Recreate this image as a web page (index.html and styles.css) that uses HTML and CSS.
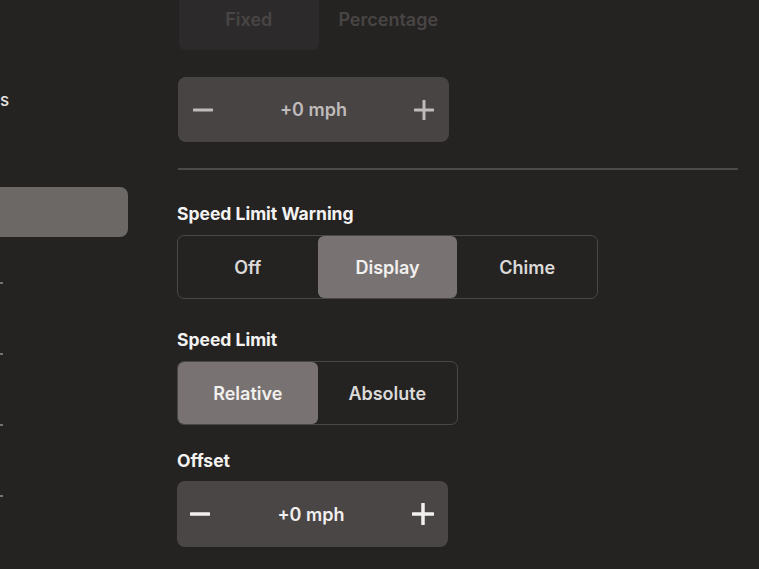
FILE: index.html
```html
<!DOCTYPE html>
<html lang="en">
<head>
    <meta charset="UTF-8">
    <meta name="viewport" content="width=device-width, initial-scale=1.0">
    <title>Speed Assist</title>
    <link rel="stylesheet" href="styles.css">
</head>
<body>
    <div class="screen">
        <aside class="sidebar">
            <div class="nav-item first"><span class="nav-text">s</span></div>
            <div class="nav-item active"></div>
            <div class="nav-item"><span class="nav-mark"></span></div>
            <div class="nav-item"><span class="nav-mark"></span></div>
            <div class="nav-item"><span class="nav-mark"></span></div>
            <div class="nav-item"><span class="nav-mark"></span></div>
        </aside>

        <main class="panel">
            <div class="segmented faded top">
                <button class="segment selected">Fixed</button>
                <button class="segment">Percentage</button>
            </div>

            <div class="stepper dim">
                <button class="step-btn">
                    <svg width="20" height="20" viewBox="0 0 20 20"><path d="M1 10h18" stroke="currentColor" stroke-width="3" stroke-linecap="round"/></svg>
                </button>
                <span class="step-value">+0 mph</span>
                <button class="step-btn">
                    <svg width="20" height="20" viewBox="0 0 20 20"><path d="M1 10h18M10 1v18" stroke="currentColor" stroke-width="3" stroke-linecap="round"/></svg>
                </button>
            </div>

            <hr class="divider">

            <div class="field warning">
                <label>Speed Limit Warning</label>
                <div class="segmented three">
                    <button class="segment">Off</button>
                    <button class="segment selected">Display</button>
                    <button class="segment">Chime</button>
                </div>
            </div>

            <div class="field">
                <label>Speed Limit</label>
                <div class="segmented">
                    <button class="segment selected">Relative</button>
                    <button class="segment">Absolute</button>
                </div>
            </div>

            <div class="field offset">
                <label>Offset</label>
                <div class="stepper">
                    <button class="step-btn">
                        <svg width="20" height="20" viewBox="0 0 20 20"><path d="M1 10h18" stroke="currentColor" stroke-width="3.5" stroke-linecap="round"/></svg>
                    </button>
                    <span class="step-value">+0 mph</span>
                    <button class="step-btn">
                        <svg width="22" height="22" viewBox="0 0 22 22"><path d="M1 11h20M11 1v20" stroke="currentColor" stroke-width="3.5" stroke-linecap="round"/></svg>
                    </button>
                </div>
            </div>
        </main>
    </div>
</body>
</html>
```

FILE: styles.css
```css
body {
    margin: 0;
    background-color: #242322;
    font-family: Inter, "Noto Sans", sans-serif;
    color: #ecebea;
    overflow: hidden;
}
.screen {
    display: flex;
    height: 569px;
}
.sidebar {
    width: 128px;
    flex-shrink: 0;
    display: flex;
    flex-direction: column;
    gap: 21px;
}
.nav-item {
    height: 50px;
    display: flex;
    align-items: center;
}
.nav-item.first {
    margin-top: 75px;
}
.nav-item.active {
    margin-top: 41px;
    background-color: #6c6866;
    border-radius: 0 8px 8px 0;
}
.nav-text {
    font-size: 17px;
    font-weight: 500;
    color: #e6e4e3;
}
.nav-mark {
    width: 3px;
    height: 2px;
    background-color: #77716f;
}
.panel {
    margin-left: 49px;
    width: 561px;
    display: flex;
    flex-direction: column;
}
button {
    font-family: inherit;
    border: none;
    background: none;
    color: inherit;
    padding: 0;
}
.segmented {
    display: flex;
    width: 281px;
    height: 64px;
    box-sizing: border-box;
    border: 1px solid #4a4847;
    border-radius: 7px;
}
.segmented.three {
    width: 421px;
}
.segment {
    flex: 1;
    font-size: 18px;
    font-weight: 600;
    color: #dcdad9;
    border-radius: 6px;
}
.segment.selected {
    background-color: #787372;
    color: #f2f0ef;
}
.segmented.faded {
    margin-top: -13px;
    margin-left: 1px;
    border-color: transparent;
}
.segmented.faded .segment {
    color: #484544;
}
.segmented.faded .segment.selected {
    background-color: #2c2a2a;
}
.stepper {
    width: 271px;
    height: 66px;
    box-sizing: border-box;
    background-color: #4b4646;
    border-radius: 8px;
    display: flex;
    align-items: center;
    justify-content: space-between;
    padding: 0 14px 0 13px;
    color: #f2f0ef;
}
.stepper.dim {
    margin-top: 26px;
    margin-left: 1px;
    height: 65px;
    padding: 0 15px 0 15px;
    color: #bfbbba;
    background-color: #484444;
}
.step-btn {
    display: flex;
    align-items: center;
}
.step-value {
    font-size: 18px;
    font-weight: 600;
}
.divider {
    margin: 26px 0 0 1px;
    border: none;
    height: 2px;
    background-color: #4d4b4a;
}
.field {
    display: flex;
    flex-direction: column;
    gap: 11px;
    margin-top: 31px;
}
.field.warning {
    margin-top: 34px;
}
.field.offset {
    margin-top: 26px;
    gap: 10px;
}
label {
    font-size: 17.5px;
    font-weight: 700;
    line-height: 20px;
    color: #f4f3f2;
}
```
